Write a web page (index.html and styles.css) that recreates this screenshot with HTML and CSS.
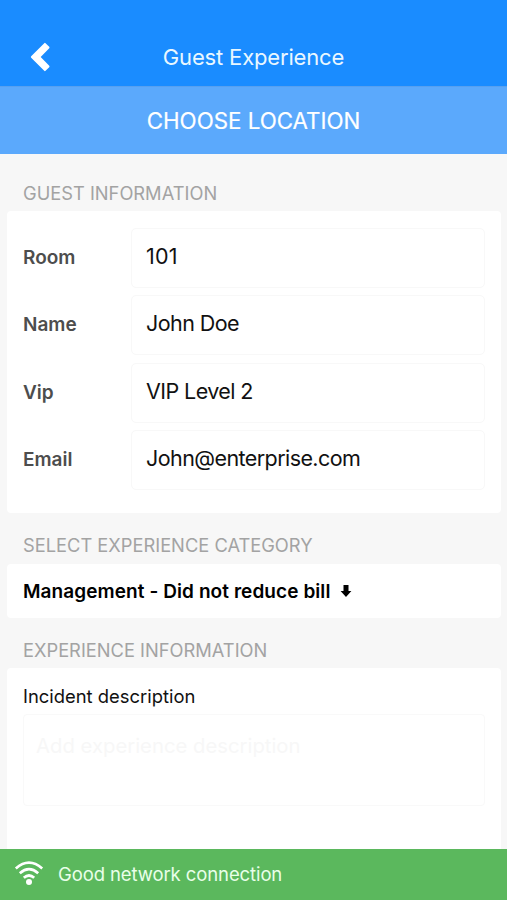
FILE: index.html
```html
<!DOCTYPE html>
<html lang="en">
<head>
<meta charset="utf-8">
<title>Guest Experience</title>
<link rel="stylesheet" href="styles.css">
</head>
<body>
<div class="app">
  <header class="navbar">
    <svg class="back" viewBox="0 0 20 30" width="20" height="30" aria-hidden="true"><path d="M1.8 15 14.9 1.8 18.6 5.5 9.3 15l9.3 9.5-3.7 3.7z" fill="#fff" stroke="#fff" stroke-width="1.8" stroke-linejoin="round"/></svg>
    <h1 class="title"><span>Guest Experience</span></h1>
  </header>
  <div class="location"><span>CHOOSE LOCATION</span></div>
  <main class="content">
    <h2 class="heading heading-guest"><span>GUEST INFORMATION</span></h2>
    <section class="card guest">
      <div class="row"><span class="label">Room</span><div class="field number"><span>101</span></div></div>
      <div class="row"><span class="label">Name</span><div class="field"><span>John Doe</span></div></div>
      <div class="row"><span class="label">Vip</span><div class="field"><span>VIP Level 2</span></div></div>
      <div class="row"><span class="label">Email</span><div class="field"><span>John@enterprise.com</span></div></div>
    </section>
    <h2 class="heading heading-category"><span>SELECT EXPERIENCE CATEGORY</span></h2>
    <section class="card category">
      <span class="category-name">Management - Did not reduce bill</span>
      <svg class="arrow" viewBox="0 0 12 14" width="12" height="14" aria-hidden="true"><path d="M3.5 1h5v6h2.9L6 13 .6 7h2.9z"/></svg>
    </section>
    <h2 class="heading heading-info"><span>EXPERIENCE INFORMATION</span></h2>
    <section class="card info">
      <div class="info-label"><span>Incident description</span></div>
      <div class="textarea"><span>Add experience description</span></div>
    </section>
  </main>
  <footer class="network">
    <svg class="wifi" viewBox="0 0 30 26" width="30" height="26" aria-hidden="true"><g fill="none" stroke="#fff" stroke-width="2.7"><path d="M1.8 8.4q13.2-11.4 26.4 0"/><path d="M5.8 13.2q9.2-8 18.4 0"/><path d="M9.8 17.8q5.2-4.6 10.4 0"/></g><circle cx="15" cy="22" r="3" fill="#fff"/></svg>
    <span>Good network connection</span>
  </footer>
</div>
</body>
</html>
```
FILE: styles.css
```css
* { box-sizing: border-box; }
body { margin: 0; font-family: Inter, "Liberation Sans", sans-serif; color: #111; background: #f7f7f7; }
.app { height: 900px; display: flex; flex-direction: column; overflow: hidden; }
h1, h2 { margin: 0; font-weight: 400; }
span { white-space: nowrap; }

.navbar { height: 86px; padding-top: 28px; background: #1a8cff; display: grid; grid-template-columns: 60px 1fr 60px; align-items: center; flex: none; }
.back { margin-left: 30px; }
.title { color: #e9f7ff; font-size: 22px; line-height: 58px; text-align: center; letter-spacing: -0.16px; }
.location { height: 68px; flex: none; background: #5ba9fc; color: #fff; font-size: 22.3px; line-height: 67px; text-align: center; border-top: 1px solid #58a0ef; -webkit-text-stroke: 0.2px #fff; }

.content { flex: 1; min-height: 0; display: flex; flex-direction: column; padding: 0 6px 0 7px; overflow: hidden; }
.heading { flex: none; padding-left: 16px; color: #a3a3a3; font-size: 18.3px; }
.heading-guest { height: 57px; line-height: 79px; }
.heading-category { height: 51px; line-height: 65px; }
.heading-info { height: 50px; line-height: 65px; }
.card { flex: none; background: #fff; border-radius: 4px; }

.guest { height: 302px; padding: 17px 16px 0; display: flex; flex-direction: column; gap: 7.4px; }
.row { height: 60px; display: grid; grid-template-columns: 108px 1fr; align-items: center; }
.label { color: #4d4d4d; font-size: 19px; font-weight: 600; line-height: 24px; }
.field { height: 60px; border: 1px solid #f8f8f8; border-radius: 5px; padding-left: 14px; font-size: 21.5px; line-height: 55px; letter-spacing: -0.58px; }
.number { letter-spacing: 0.2px; }

.category { height: 54px; padding-left: 16px; display: flex; align-items: center; gap: 10px; font-size: 19px; letter-spacing: 0.08px; font-weight: 600; color: #000; }

.info { height: 190px; padding: 0 16px; border-radius: 4px 4px 0 0; }
.info-label { height: 46px; line-height: 56px; font-size: 18.4px; }
.textarea { height: 92px; border: 1px solid #f9f9f9; border-radius: 4px; padding: 17px 12px; font-size: 20.3px; line-height: 28px; color: #f7f7f7; }

.network { height: 51px; flex: none; padding: 0 0 1px 14px; background: #5bb85d; color: #e9ffe9; display: flex; align-items: center; gap: 14px; font-size: 18.5px; letter-spacing: -0.1px; }
.wifi { margin-top: -3px; }
```
